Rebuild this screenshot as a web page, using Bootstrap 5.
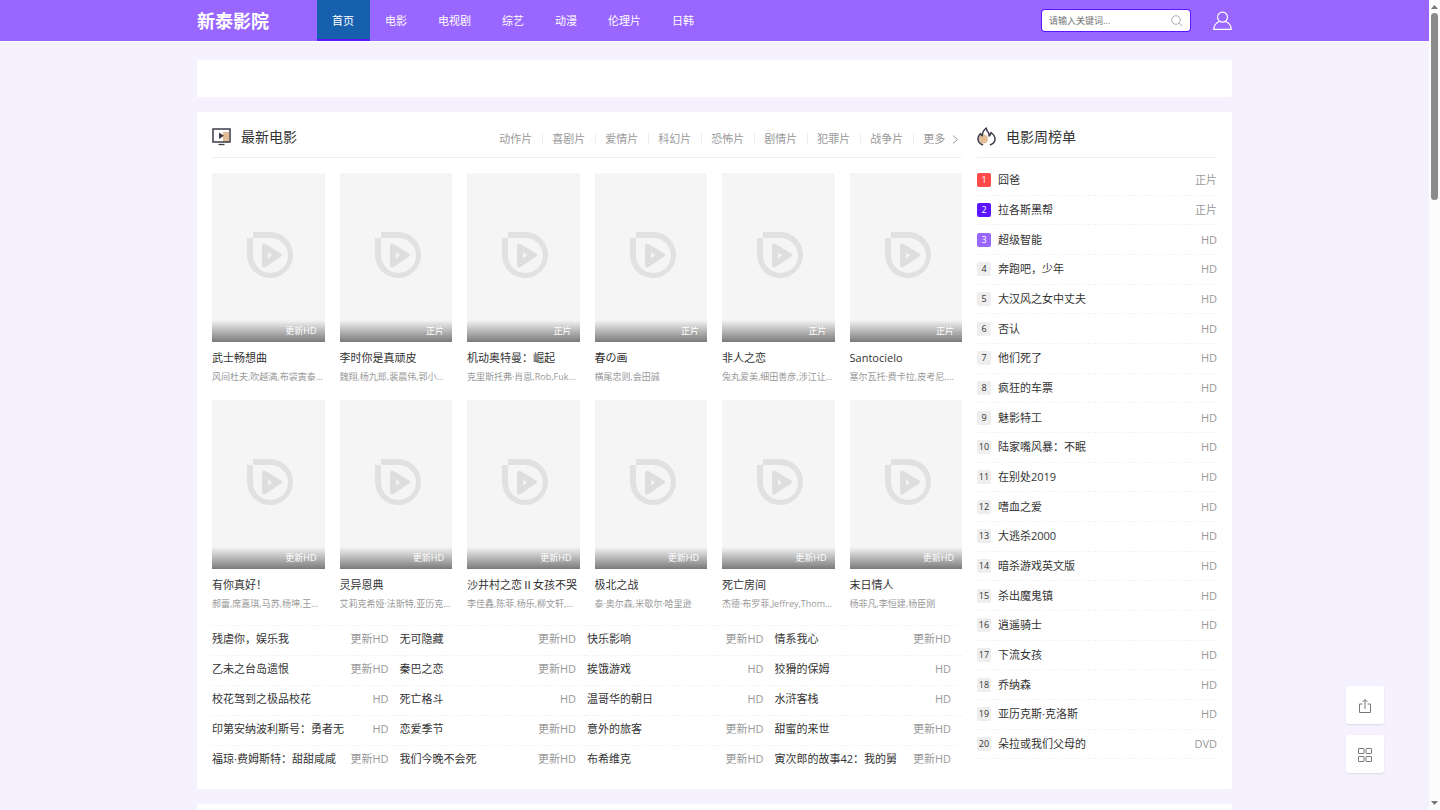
<!DOCTYPE html>
<html lang="zh-CN">
<head>
<meta charset="utf-8">
<meta name="viewport" content="width=device-width, initial-scale=1">
<title>新泰影院</title>
<link href="https://cdn.jsdelivr.net/npm/bootstrap@5.3.0/dist/css/bootstrap.min.css" rel="stylesheet">
<style>
:root{--brand:#96f;--deep:#5b16ff;--page:#f5f1ff}
body{font-family:"Open Sans","Noto Sans CJK SC",sans-serif;font-size:11px;line-height:16px;color:#333;background:var(--page)}
a{color:inherit;text-decoration:none}
.shell{max-width:1035px}
.topbar{height:41px;background:var(--brand);box-shadow:0 1px 0 #fff}
.brand-name{font-size:18px;line-height:24px;font-weight:700;width:120px}
.topbar .nav-link{padding:0 16px 0 15px;line-height:41px;height:41px;color:#fff}
.topbar .nav-link.active{background:linear-gradient(#1660ad,#1660ad) no-repeat 0 0/100% 39px var(--deep)}
.search-box{width:148px;height:21px;background:#fff;border-radius:3px;box-shadow:0 0 0 1px var(--deep);padding:0 7px;margin-right:23px}
.search-box input{font-size:9px;line-height:14px;color:#555;min-width:0;outline:0}
.search-box input::placeholder{color:#757575;opacity:1}
.panel{background:#fff;border-radius:1px;margin-bottom:15px}
.panel-notice{height:37px;margin-top:19px}
.panel-body{padding:0 15px 14px;gap:15px}
.side{width:240px;padding-bottom:15px}
.head{height:46px;border-bottom:1px solid #f0f0f0;padding-top:4px}
.head h2{font-size:14px;line-height:20px;font-weight:400;margin:0 0 0 10px}
.cats{color:#999;padding-top:4px}
.cats a{line-height:11px}
.cats a+a{border-left:1px solid #eee;margin-left:10px;padding-left:9px}
.cats svg{margin:0 3px 0 4px}
.posters{display:grid;grid-template-columns:repeat(6,minmax(0,1fr));gap:15px;padding-top:15px}
.poster{position:relative;aspect-ratio:2/3;background:#f5f5f5;padding:0 0 4px 4px}
.poster svg{width:48px;height:48px}
.poster .state{position:absolute;inset:auto 0 0 0;padding:4px 8px;font-size:9px;line-height:14px;text-align:right;color:#fff;background:linear-gradient(transparent,rgba(0,0,0,.5))}
.film{font-size:11px;line-height:16px;font-weight:400;margin:8px 0 2px}
.cast{font-size:9px;line-height:17px;color:#999;margin:0}
.links{display:grid;grid-template-columns:repeat(4,minmax(0,1fr));margin-top:13px}
.links li{height:30px;border-top:1px dashed #f3f3f3;padding-right:11px}
.links a,.links .tag{line-height:14px;padding-bottom:2px}
.tag{color:#999}
.ranks{padding-top:8px}
.ranks li{border-bottom:1px dashed #f3f3f3;gap:7px}
.num{width:14px;height:14px;border-radius:2px;background:#eee;font-size:9px;line-height:14px;text-align:center}
.ranks li:nth-child(-n+3) .num{color:#fff}
.ranks li:nth-child(1) .num{background:#ff4a4a}
.ranks li:nth-child(2) .num{background:var(--deep)}
.ranks li:nth-child(3) .num{background:var(--brand)}
.scrollbar{width:11px;background:#fcfcfc;padding:4px 2px}
.thumb{width:7px;height:187px;border-radius:4px;background:#8b8b8b;margin-top:4px}
.tools{position:fixed;right:56px;bottom:37px;gap:11px}
.tools button{width:38px;height:38px;border:0;border-radius:3px;background:#fff;box-shadow:0 1px 2px rgba(0,0,0,.1);padding:0}
</style>
</head>
<body>
<svg class="d-none"><defs>
<symbol id="play-mark" viewBox="0 0 48 48"><path d="M7 1h18a23 23 0 1 1-24 23V7h6zM7 7v17a17.500 17.500 0 1 0 18-17z" fill="#e1e1e1" fill-rule="evenodd"/><path d="M20 13.200 35 22.500q2.500 1.500 0 3L20 35.800q-4 2-4-2V15.200q0-4 4-2zM22 21.500v6l4-3z" fill="#dedede" fill-rule="evenodd"/></symbol>
</defs></svg>
<div class="d-flex vh-100 overflow-hidden">
<div class="flex-grow-1 overflow-hidden">
<header class="topbar">
<div class="shell mx-auto d-flex align-items-center h-100">
<a class="brand-name text-white" href="#">新泰影院</a>
<nav class="nav flex-nowrap" id="menu"></nav>
<form class="search-box d-flex align-items-center ms-auto">
<input class="border-0 p-0 flex-grow-1 bg-transparent" type="text" placeholder="请输入关键词..." aria-label="请输入关键词">
<button class="border-0 bg-transparent p-0 d-flex" type="button" aria-label="搜索"><svg width="12" height="12" viewBox="0 0 12 12" fill="none" stroke="#999" stroke-width=".8"><circle cx="5" cy="5" r="4.300"/><path d="m8.200 8.200 3 3"/></svg></button>
</form>
<a class="d-flex" href="#" aria-label="用户"><svg width="19" height="20" viewBox="0 0 19 20" fill="none" stroke="#fff" stroke-width="1.200"><circle cx="9.500" cy="6.200" r="5"/><path d="M6.500 10.500Q1 12.500.8 18.400h17.400q-.2-5.900-5.700-7.900"/></svg></a>
</div>
</header>
<main class="shell mx-auto">
<section class="panel panel-notice"></section>
<section class="panel panel-body d-flex">
<div class="flex-grow-1" style="min-width:0">
<div class="head d-flex align-items-center">
<svg width="19" height="18" viewBox="0 0 19 18"><path fill="#e3bd95" d="M11 4h6v10h-6z"/><path d="M1 1h17v13H1z" fill="none" stroke="#3d3a48" stroke-width="1.500"/><path d="m7 4.500 5 3.200L7 11z" fill="#3d3a48"/><path d="M6.500 16.500h6" stroke="#3d3a48" stroke-width="1.300"/></svg>
<h2>最新电影</h2>
<div class="cats d-flex align-items-center ms-auto" id="cats"></div>
</div>
<div class="posters" id="posters"></div>
<ul class="links list-unstyled mb-0" id="links"></ul>
</div>
<aside class="side d-flex flex-column flex-shrink-0">
<div class="head d-flex align-items-center flex-shrink-0">
<svg width="19" height="19" viewBox="0 0 19 19"><circle cx="6.500" cy="12" r="4.500" fill="#e3bd95"/><path d="M5.500 17.800C2.500 16.500 1 14.500 1 12q0-3 2.500-5.500.3 1.500 1.800 2.200Q5.300 4 9.300 1q.2 2.500 1.700 4 1.300 1.500 1 4M12 9q1.800-1 2-3.500Q18 8.500 18 12q0 4-4.500 5.800" fill="none" stroke="#3d3a48" stroke-width="1.500" stroke-linecap="round" stroke-linejoin="round"/></svg>
<h2>电影周榜单</h2>
</div>
<ol class="ranks list-unstyled mb-0 d-flex flex-column flex-grow-1" id="ranks"></ol>
</aside>
</section>
<section class="panel panel-notice mt-0"></section>
</main>
</div>
<div class="scrollbar flex-shrink-0 d-flex flex-column" aria-hidden="true">
<svg width="7" height="5" viewBox="0 0 7 5"><path d="M0 5 3.500 1 7 5z" fill="#777"/></svg>
<div class="thumb"></div>
<svg class="mt-auto" width="7" height="5" viewBox="0 0 7 5"><path d="M0 0h7L3.500 4z" fill="#777"/></svg>
</div>
</div>
<div class="tools d-flex flex-column">
<button type="button" aria-label="分享"><svg width="14" height="16" viewBox="0 0 14 16" fill="none" stroke="#777"><path d="M4.500 6H1.500v8.500h11V6h-3M7 11V1.500M4.500 4 7 1.500 9.500 4"/></svg></button>
<button type="button" aria-label="分类"><svg width="14" height="14" viewBox="0 0 14 14" fill="none" stroke="#777"><rect x=".5" y=".5" width="5.500" height="5" rx=".5"/><rect x="8" y=".5" width="5.500" height="5" rx=".5"/><rect x=".5" y="8.500" width="5.500" height="5" rx=".5"/><rect x="8" y="8.500" width="5.500" height="5" rx=".5"/></svg></button>
</div>
<script>
const fill = (id, rows, draw) => document.getElementById(id).innerHTML = rows.map(draw).join('');
fill('menu', ['首页','电影','电视剧','综艺','动漫','伦理片','日韩'], (t, i) => `<a class="nav-link${i ? '' : ' active'}" href="#">${t}</a>`);
fill('cats', ['动作片','喜剧片','爱情片','科幻片','恐怖片','剧情片','犯罪片','战争片','更多'], t => `<a href="#">${t}${t === '更多' ? ' <svg width="7" height="9" viewBox="0 0 7 9" fill="none" stroke="#999"><path d="m1 .5 4.500 4L1 8.500"/></svg>' : ''}</a>`);
fill('posters', [
['武士畅想曲','更新HD','风间杜夫,吹越满,布袋寅泰,布施博'],
['李时你是真顽皮','正片','魏翔,杨九郎,裴晨伟,郭小小,王一'],
['机动奥特曼：崛起','正片','克里斯托弗·肖恩,Rob,Fukuzaki'],
['春の画','正片','横尾忠则,会田誠'],
['非人之恋','正片','兔丸爱美,细田善彦,涉江让二,佐藤'],
['Santocielo','正片','塞尔瓦托·费卡拉,皮考尼,瓦伦蒂诺'],
['有你真好！','更新HD','郝蕾,席嘉琪,马苏,杨坤,王迅,李晨'],
['灵异恩典','更新HD','艾莉克希娅·法斯特,亚历克斯,史密斯'],
['沙井村之恋Ⅱ女孩不哭','更新HD','李佳鑫,陈菲,杨乐,柳文轩,张小龙'],
['极北之战','更新HD','泰·奥尔森,米歇尔·哈里逊'],
['死亡房间','更新HD','杰德·布罗菲,Jeffrey,Thomas,Lee'],
['末日情人','更新HD','杨非凡,李恒建,杨臣刚']
], ([n, s, c]) => `<article><a href="#" class="poster d-flex align-items-center justify-content-center"><svg><use href="#play-mark"/></svg><span class="state">${s}</span></a><h3 class="film text-truncate"><a href="#">${n}</a></h3><p class="cast text-truncate">${c}</p></article>`);
fill('links', [
['残虐你，娱乐我','更新HD'],['无可隐藏','更新HD'],['快乐影响','更新HD'],['情系我心','更新HD'],
['乙未之台岛遗恨','更新HD'],['秦巴之恋','更新HD'],['挨饿游戏','HD'],['狡猾的保姆','HD'],
['校花驾到之极品校花','HD'],['死亡格斗','HD'],['温哥华的朝日','HD'],['水浒客栈','HD'],
['印第安纳波利斯号：勇者无','HD'],['恋爱季节','更新HD'],['意外的旅客','更新HD'],['甜蜜的来世','更新HD'],
['福琼·费姆斯特：甜甜咸咸','更新HD'],['我们今晚不会死','更新HD'],['布希维克','更新HD'],['寅次郎的故事42：我的舅','更新HD']
], ([n, s]) => `<li class="d-flex align-items-center justify-content-between text-nowrap"><a href="#">${n}</a><span class="tag">${s}</span></li>`);
fill('ranks', ['囧爸','拉各斯黑帮','超级智能','奔跑吧，少年','大汉风之女中丈夫','否认','他们死了','疯狂的车票','魅影特工','陆家嘴风暴：不眠','在别处2019','嗜血之爱','大逃杀2000','暗杀游戏英文版','杀出魔鬼镇','逍遥骑士','下流女孩','乔纳森','亚历克斯·克洛斯','朵拉或我们父母的'],
(n, i) => `<li class="d-flex align-items-center flex-fill"><span class="num">${i + 1}</span><a href="#">${n}</a><span class="tag ms-auto">${i < 2 ? '正片' : i === 19 ? 'DVD' : 'HD'}</span></li>`);
</script>
<script src="https://cdn.jsdelivr.net/npm/bootstrap@5.3.0/dist/js/bootstrap.bundle.min.js"></script>
</body>
</html>
